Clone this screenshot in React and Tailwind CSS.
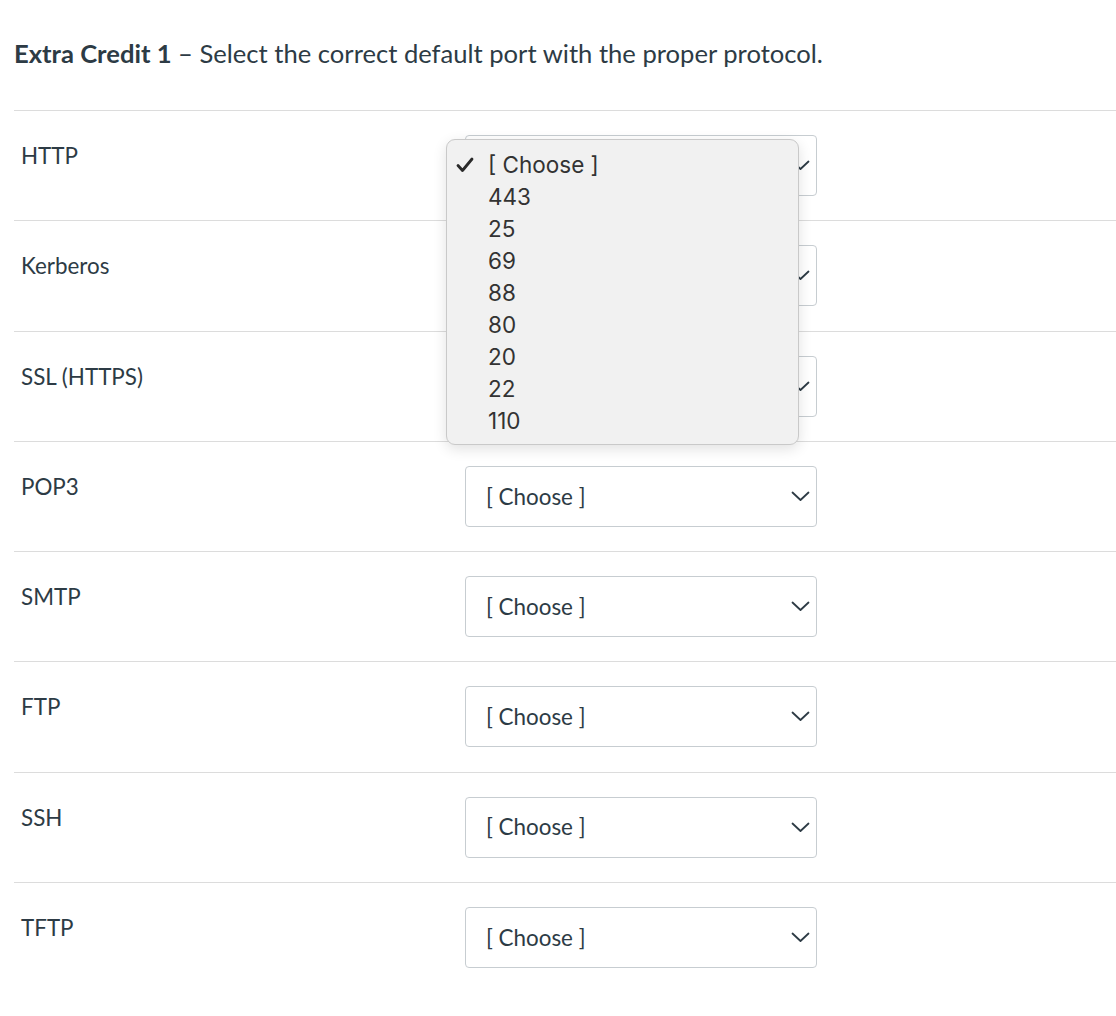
const protocols = ["HTTP", "Kerberos", "SSL (HTTPS)", "POP3", "SMTP", "FTP", "SSH", "TFTP"];
const ports = ["443", "25", "69", "88", "80", "20", "22", "110"];

const Chevron = () => (
  <svg width="19" height="11" viewBox="0 0 19 11" fill="none">
    <path d="M1.5 1.5 L9.5 9 L17.5 1.5" stroke="#2d3b45" strokeWidth="1.8" strokeLinecap="round" strokeLinejoin="round" />
  </svg>
);

const Select = () => (
  <div className="flex items-center justify-between w-[352px] h-[61px] border border-[#c7cdd1] rounded-[4px] bg-white pl-[20px] pr-[6px]">
    <span className="text-[22.4px] text-[#2d3b45]">[ Choose ]</span>
    <Chevron />
  </div>
);

const App = () => {
  return (
    <div className="relative min-h-[1016px] bg-white pl-[14px] pt-[38px] font-['Lato',sans-serif] text-[#2d3b45]">
      <h2 className="text-[25.6px] leading-[30px] mb-[42px]">
        <span className="font-bold">Extra Credit 1</span> – Select the correct default port with the proper protocol.
      </h2>

      <div>
        {protocols.map((p) => (
          <div key={p} className="flex h-[110.3px] border-t border-[#dcdcdc]">
            <div className="w-[451px] pl-[7px] pt-[30px] text-[22.4px] leading-[30px]">{p}</div>
            <div className="pt-[24px]">
              <Select />
            </div>
          </div>
        ))}
      </div>

      <div className="absolute left-[446px] top-[139px] w-[353px] h-[306px] rounded-[9px] border border-[#c9c9c9] bg-[#f1f1f1] shadow-[0_4px_14px_rgba(0,0,0,0.12)] pt-[9px] font-['Inter',sans-serif] text-[22.5px] text-[#333]">
        <div className="flex items-center h-[32px]">
          <span className="w-[41px] pl-[9px] leading-none">
            <svg width="18" height="16" viewBox="0 0 18 16">
              <path d="M2 8.5 L6.5 13.5 L16 2" fill="none" stroke="#2a2a2a" strokeWidth="2.8" strokeLinecap="round" strokeLinejoin="round" />
            </svg>
          </span>
          <span>[ Choose ]</span>
        </div>
        {ports.map((n) => (
          <div key={n} className="flex items-center h-[32px] pl-[41px]">
            {n}
          </div>
        ))}
      </div>
    </div>
  );
};

export default App;
